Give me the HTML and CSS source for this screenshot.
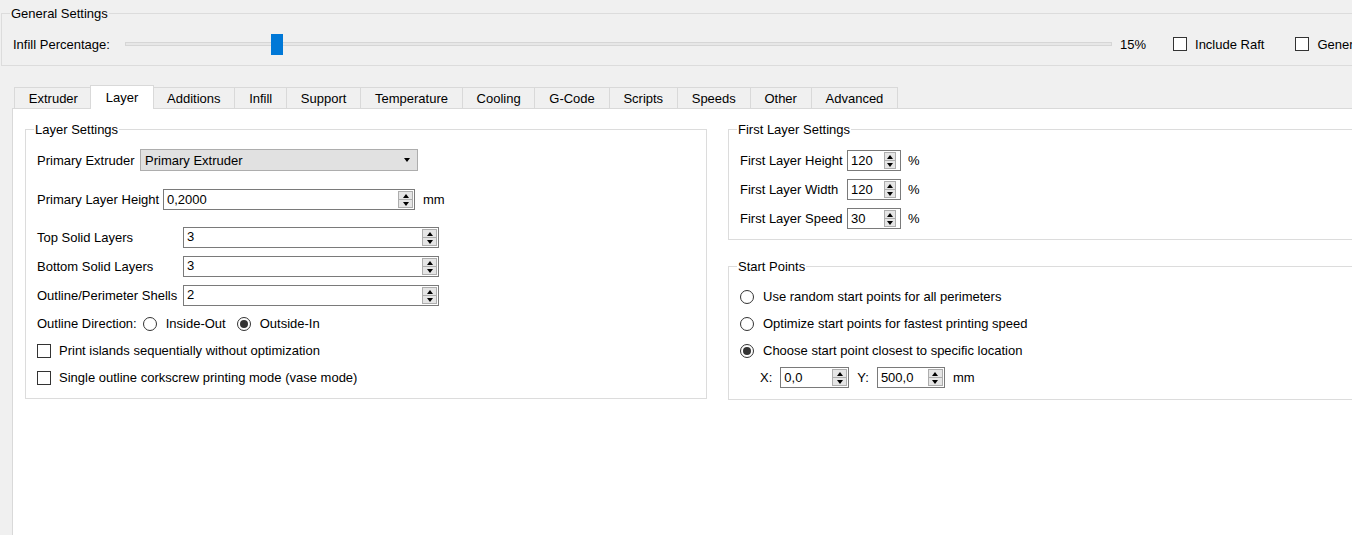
FILE: index.html
```html
<!DOCTYPE html>
<html lang="en">
<head>
    <meta charset="UTF-8">
    <meta name="viewport" content="width=device-width, initial-scale=1.0">
    <title>Slicer Settings - Layer</title>
    <link rel="stylesheet" href="styles.css">
</head>
<body>
    <div class="window">
        <fieldset class="group general">
            <legend>General Settings</legend>
            <div class="general-row">
                <span class="infill-label">Infill Percentage:</span>
                <div class="slider">
                    <div class="groove"></div>
                    <div class="handle" style="left: 146px"></div>
                </div>
                <span class="slider-value">15%</span>
                <label class="check raft"><span class="box"></span>Include Raft</label>
                <label class="check support"><span class="box"></span>Generate Support</label>
            </div>
        </fieldset>

        <div class="tabs">
            <div class="tab first">Extruder</div>
            <div class="tab active">Layer</div>
            <div class="tab">Additions</div>
            <div class="tab">Infill</div>
            <div class="tab">Support</div>
            <div class="tab">Temperature</div>
            <div class="tab">Cooling</div>
            <div class="tab">G-Code</div>
            <div class="tab">Scripts</div>
            <div class="tab">Speeds</div>
            <div class="tab">Other</div>
            <div class="tab last">Advanced</div>
        </div>

        <div class="tab-pane">
            <div class="columns">
                <!-- left column -->
                <fieldset class="group">
                    <legend>Layer Settings</legend>
                    <div class="layer-body">
                        <div class="row">
                            <span class="lbl-extruder">Primary Extruder</span>
                            <div class="combo">
                                <span>Primary Extruder</span>
                                <span class="combo-arrow"></span>
                            </div>
                        </div>

                        <div class="row height-row">
                            <span class="lbl-height">Primary Layer Height</span>
                            <div class="spin wide-spin">
                                <span class="spin-value">0,2000</span>
                                <div class="spin-btns"><span class="up"><i></i></span><span class="down"><i></i></span></div>
                            </div>
                            <span class="unit">mm</span>
                        </div>

                        <div class="form-grid">
                            <span>Top Solid Layers</span>
                            <div class="spin">
                                <span class="spin-value">3</span>
                                <div class="spin-btns"><span class="up"><i></i></span><span class="down"><i></i></span></div>
                            </div>
                            <span>Bottom Solid Layers</span>
                            <div class="spin">
                                <span class="spin-value">3</span>
                                <div class="spin-btns"><span class="up"><i></i></span><span class="down"><i></i></span></div>
                            </div>
                            <span>Outline/Perimeter Shells</span>
                            <div class="spin">
                                <span class="spin-value">2</span>
                                <div class="spin-btns"><span class="up"><i></i></span><span class="down"><i></i></span></div>
                            </div>
                        </div>

                        <div class="row option-row direction-row">
                            <span>Outline Direction:</span>
                            <label class="radio"><span class="circle"></span>Inside-Out</label>
                            <label class="radio"><span class="circle checked"></span>Outside-In</label>
                        </div>

                        <label class="check option-row"><span class="box"></span>Print islands sequentially without optimization</label>
                        <label class="check option-row"><span class="box"></span>Single outline corkscrew printing mode (vase mode)</label>
                    </div>
                </fieldset>

                <!-- right column -->
                <div class="right-col">
                    <fieldset class="group">
                        <legend>First Layer Settings</legend>
                        <div class="first-body">
                            <span>First Layer Height</span>
                            <div class="spin short-spin">
                                <span class="spin-value">120</span>
                                <div class="spin-btns"><span class="up"><i></i></span><span class="down"><i></i></span></div>
                            </div>
                            <span class="pct">%</span>
                            <span>First Layer Width</span>
                            <div class="spin short-spin">
                                <span class="spin-value">120</span>
                                <div class="spin-btns"><span class="up"><i></i></span><span class="down"><i></i></span></div>
                            </div>
                            <span class="pct">%</span>
                            <span>First Layer Speed</span>
                            <div class="spin short-spin">
                                <span class="spin-value">30</span>
                                <div class="spin-btns"><span class="up"><i></i></span><span class="down"><i></i></span></div>
                            </div>
                            <span class="pct">%</span>
                        </div>
                    </fieldset>

                    <fieldset class="group start-points">
                        <legend>Start Points</legend>
                        <div class="start-body">
                            <label class="radio option-row"><span class="circle"></span>Use random start points for all perimeters</label>
                            <label class="radio option-row"><span class="circle"></span>Optimize start points for fastest printing speed</label>
                            <label class="radio option-row"><span class="circle checked"></span>Choose start point closest to specific location</label>
                            <div class="row xy-row">
                                <span>X:</span>
                                <div class="spin x-spin">
                                    <span class="spin-value">0,0</span>
                                    <div class="spin-btns"><span class="up"><i></i></span><span class="down"><i></i></span></div>
                                </div>
                                <span class="y-label">Y:</span>
                                <div class="spin y-spin">
                                    <span class="spin-value">500,0</span>
                                    <div class="spin-btns"><span class="up"><i></i></span><span class="down"><i></i></span></div>
                                </div>
                                <span>mm</span>
                            </div>
                        </div>
                    </fieldset>
                </div>
            </div>
        </div>
    </div>
</body>
</html>
```

FILE: styles.css
```css
* {
    box-sizing: border-box;
}

body {
    margin: 0;
    background-color: #f0f0f0;
    font-family: "Liberation Sans", Arial, sans-serif;
    font-size: 13px;
    color: #000;
    overflow: hidden;
}

.window {
    width: 1422px;
    height: 545px;
    display: flex;
    flex-direction: column;
}

/* group boxes */
.group {
    margin: 0;
    padding: 0;
    min-width: 0;
    border: 1px solid #dcdcdc;
}

.group legend {
    position: relative;
    top: 1px;
    margin-left: 8px;
    padding: 0 1px;
    line-height: 14px;
}

.general {
    margin: 6px 0 0 1px;
}

.general-row {
    display: flex;
    align-items: center;
    height: 22px;
    margin: 13px 0 10px 11px;
    white-space: nowrap;
}

.infill-label {
    width: 112px;
}

.slider {
    position: relative;
    width: 987px;
    height: 21px;
}

.groove {
    margin-top: 8px;
    height: 4px;
    border: 1px solid #d6d6d6;
    background-color: #e7e7e7;
}

.handle {
    position: absolute;
    top: 0;
    width: 12px;
    height: 21px;
    background-color: #0078d7;
}

.slider-value {
    margin-left: 8px;
}

/* checkboxes and radios */
.check, .radio {
    display: flex;
    align-items: center;
    white-space: nowrap;
}

.box {
    width: 14px;
    height: 14px;
    margin-right: 8px;
    border: 1px solid #333;
    background-color: #fff;
}

.raft {
    margin-left: 27px;
}

.support {
    margin-left: 31px;
}

.circle {
    width: 14px;
    height: 14px;
    margin-right: 9px;
    border: 1px solid #333;
    border-radius: 50%;
    background-color: #fff;
    display: flex;
    align-items: center;
    justify-content: center;
}

.circle.checked::after {
    content: "";
    width: 8px;
    height: 8px;
    border-radius: 50%;
    background-color: #333;
}

/* tabs */
.tabs {
    display: flex;
    align-items: flex-end;
    height: 23px;
    margin-top: 19px;
    padding-left: 14px;
}

.tab {
    height: 21px;
    line-height: 21px;
    padding: 0 13.8px;
    border: 1px solid #d9d9d9;
    border-right: none;
    border-bottom: none;
    background-color: #f0f0f0;
}

.tab.last {
    border-right: 1px solid #d9d9d9;
}

.tab.active {
    position: relative;
    z-index: 1;
    height: 24px;
    line-height: 23px;
    margin: 0 -2px -1px;
    padding: 0 15px;
    border-right: 1px solid #d9d9d9;
    background-color: #fff;
}

.tab-pane {
    flex: 1;
    margin-left: 12px;
    padding: 13px 12px 0;
    border: 1px solid #d9d9d9;
    background-color: #fff;
}

.columns {
    display: grid;
    grid-template-columns: 682px 682px;
    column-gap: 21px;
    align-items: start;
}

/* layer settings */
.layer-body {
    padding: 13px 0 11px 11px;
}

.row {
    display: flex;
    align-items: center;
}

.lbl-extruder {
    width: 103px;
}

.lbl-height {
    width: 126px;
}

.combo {
    width: 278px;
    height: 22px;
    padding: 0 7px 0 4px;
    border: 1px solid #adadad;
    background-color: #e1e1e1;
    display: flex;
    align-items: center;
    justify-content: space-between;
}

.combo-arrow {
    width: 1px;
    height: 0;
    border-left: 3px solid transparent;
    border-right: 3px solid transparent;
    border-top: 4px solid #000;
}

.height-row {
    margin-top: 18px;
}

.unit {
    margin-left: 8px;
}

.form-grid {
    display: grid;
    grid-template-columns: 146px 256px;
    row-gap: 8px;
    align-items: center;
    margin-top: 17px;
}

.form-grid span, .row > span {
    line-height: 16px;
    padding-top: 1px;
}

.option-row {
    height: 19px;
    margin-top: 8px;
}

.direction-row .radio:first-of-type {
    margin-left: 6px;
}

.direction-row .radio + .radio {
    margin-left: 11px;
}

/* spin boxes */
.spin {
    height: 21px;
    border: 1px solid #7a7a7a;
    background-color: #fff;
    display: flex;
    align-items: stretch;
}

.wide-spin {
    width: 252px;
}

.spin-value {
    flex: 1;
    padding-left: 3px;
    line-height: 19px;
}

.spin-btns {
    width: 15px;
    margin: 1px 1px 1px 0;
    display: flex;
    flex-direction: column;
}

.spin-btns span {
    flex: 1;
    border: 1px solid #adadad;
    background-color: #e5e5e5;
    display: flex;
    align-items: center;
    justify-content: center;
}

.spin-btns .down {
    border-top: none;
}

.spin-btns i {
    width: 1px;
    height: 0;
    border-left: 3px solid transparent;
    border-right: 3px solid transparent;
}

.spin-btns .up i {
    border-bottom: 4px solid #000;
}

.spin-btns .down i {
    border-top: 4px solid #000;
}

/* first layer settings */
.first-body {
    display: grid;
    grid-template-columns: 107px 54px auto;
    row-gap: 8px;
    align-items: center;
    padding: 14px 0 10px 11px;
    white-space: nowrap;
}

.pct {
    margin-left: 7px;
}

.short-spin .spin-btns {
    width: 12px;
    margin-right: 4px;
}

/* start points */
.start-points {
    margin-top: 19px;
}

.start-body {
    padding: 6px 0 11px 11px;
}

.xy-row {
    margin: 7px 0 0 20px;
    gap: 8px;
}

.x-spin {
    width: 69px;
}

.y-spin {
    width: 68px;
}
```
